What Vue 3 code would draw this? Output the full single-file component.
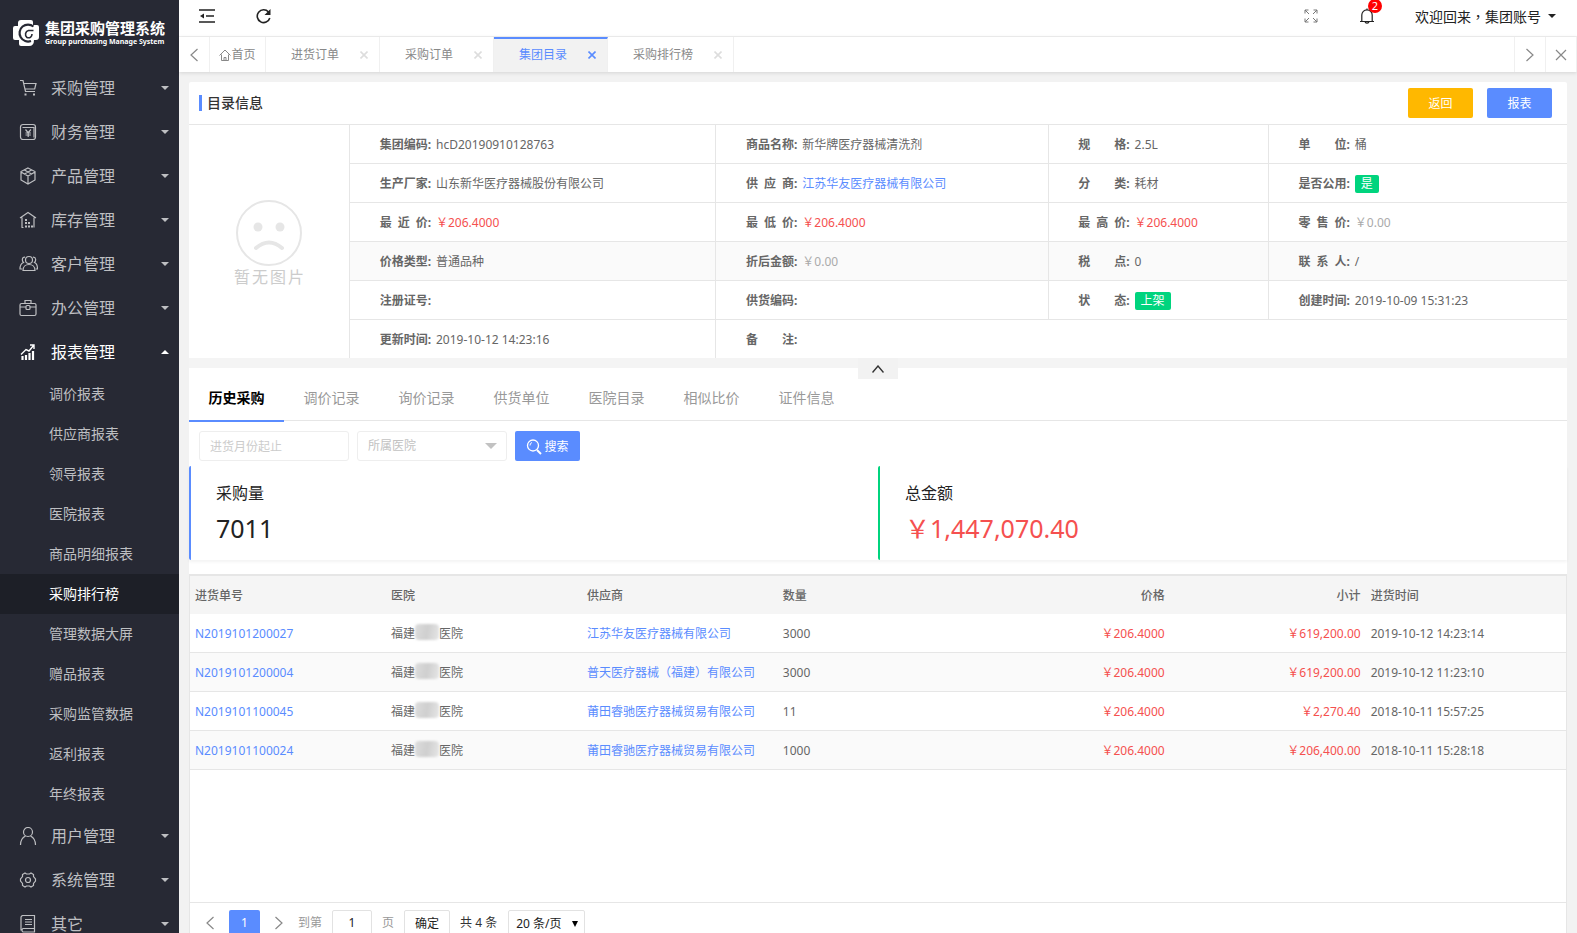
<script setup>
import { ref } from 'vue'

const topMenu = [
  { name: '采购管理', icon: 'cart' },
  { name: '财务管理', icon: 'finance' },
  { name: '产品管理', icon: 'box' },
  { name: '库存管理', icon: 'store' },
  { name: '客户管理', icon: 'people' },
  { name: '办公管理', icon: 'case' },
  {
    name: '报表管理',
    icon: 'chart',
    children: [
      '调价报表', '供应商报表', '领导报表', '医院报表', '商品明细报表', '采购排行榜',
      '管理数据大屏', '赠品报表', '采购监管数据', '返利报表', '年终报表',
    ],
  },
  { name: '用户管理', icon: 'user' },
  { name: '系统管理', icon: 'gear' },
  { name: '其它', icon: 'book' },
]
const activeChild = ref('采购排行榜')

const pageTabs = ['进货订单', '采购订单', '集团目录', '采购排行榜']
const activePage = ref('集团目录')

const two = '\u2003\u2003'
const en = '\u2002'
const infoRows = [
  [
    { label: '集团编码', value: 'hcD20190910128763' },
    { label: '商品名称', value: '新华牌医疗器械清洗剂' },
    { label: `规${two}格`, value: '2.5L' },
    { label: `单${two}位`, value: '桶' },
  ],
  [
    { label: '生产厂家', value: '山东新华医疗器械股份有限公司' },
    { label: `供${en}应${en}商`, value: '江苏华友医疗器械有限公司', kind: 'link' },
    { label: `分${two}类`, value: '耗材' },
    { label: '是否公用', value: '是', kind: 'tag' },
  ],
  [
    { label: `最${en}近${en}价`, value: '￥206.4000', kind: 'red' },
    { label: `最${en}低${en}价`, value: '￥206.4000', kind: 'red' },
    { label: `最${en}高${en}价`, value: '￥206.4000', kind: 'red' },
    { label: `零${en}售${en}价`, value: '￥0.00', kind: 'muted' },
  ],
  [
    { label: '价格类型', value: '普通品种' },
    { label: '折后金额', value: '￥0.00', kind: 'muted' },
    { label: `税${two}点`, value: '0' },
    { label: `联${en}系${en}人`, value: '/' },
  ],
  [
    { label: '注册证号', value: '' },
    { label: '供货编码', value: '' },
    { label: `状${two}态`, value: '上架', kind: 'tag' },
    { label: '创建时间', value: '2019-10-09 15:31:23' },
  ],
  [
    { label: '更新时间', value: '2019-10-12 14:23:16' },
    { label: `备${two}注`, value: '', span: 3 },
  ],
]

const detailTabs = ['历史采购', '调价记录', '询价记录', '供货单位', '医院目录', '相似比价', '证件信息']
const activeDetail = ref('历史采购')

const orders = [
  { id: 'N2019101200027', supplier: '江苏华友医疗器械有限公司', qty: '3000', price: '￥206.4000', total: '￥619,200.00', time: '2019-10-12 14:23:14' },
  { id: 'N2019101200004', supplier: '普天医疗器械（福建）有限公司', qty: '3000', price: '￥206.4000', total: '￥619,200.00', time: '2019-10-12 11:23:10' },
  { id: 'N2019101100045', supplier: '莆田睿驰医疗器械贸易有限公司', qty: '11', price: '￥206.4000', total: '￥2,270.40', time: '2018-10-11 15:57:25' },
  { id: 'N2019101100024', supplier: '莆田睿驰医疗器械贸易有限公司', qty: '1000', price: '￥206.4000', total: '￥206,400.00', time: '2018-10-11 15:28:18' },
]
</script>

<template>
  <div class="app">
    <aside class="side">
      <div class="brand">
        <svg class="brand-mark" viewBox="0 0 26 26" aria-hidden="true">
          <path fill="#fff" d="M8 0h10q2 0 2 2v3h4q2 0 2 2v10q0 3-3 3h-2q0 6-5 6H8q-2 0-2-2v-4H2q-2 0-2-2V8q0-2 2-2h3V3q0-3 3-3z" />
          <path fill="none" stroke="#272934" stroke-width="2.200" d="M20.500 6.500a8.500 8.500 0 1 0-2.500 14.500" />
          <path fill="none" stroke="#272934" stroke-width="1.600" d="M20.500 10.500h-5a4 4 0 0 0-1.500 7c3 1 5-1 5-3.500" />
        </svg>
        <div>
          <div class="brand-name">集团采购管理系统</div>
          <div class="brand-sub">Group purchasing Manage System</div>
        </div>
      </div>
      <nav>
        <div v-for="m in topMenu" :key="m.name">
          <button class="menu" :class="{ open: m.children }">
            <svg class="menu-icon" viewBox="0 0 18 18" aria-hidden="true">
              <g v-if="m.icon === 'cart'">
                <path d="M.5 1.500h3L6 12.500h9.500M4 4.500h12.500l-1.300 5.500H5.500" /><path d="M6 14.500v2M14.500 14.500v2" stroke-width="2" />
              </g>
              <g v-else-if="m.icon === 'finance'">
                <rect x="1" y="1.500" width="15" height="15" rx="2.500" /><path d="M3 4.500h11.500v10M6 6.500l2.700 3.200 2.700-3.200M8.700 9.700v4.300M6 10h5.400M6 12h5.400" />
              </g>
              <g v-else-if="m.icon === 'box'">
                <path d="M8.500 1l7 3.500v8.500l-7 4-7-4V4.500zM1.500 5l7 4 7-4M8.500 9v8M5 3l7 4M12 3L5 7" />
              </g>
              <g v-else-if="m.icon === 'store'">
                <path d="M.5 7l8-5.500 8 5.500M2.500 6.500v10M14.500 6.500v10M2 16.500h2" /><path stroke-dasharray="2 1" stroke-width="2" d="M5.500 9h2M5.500 12h5M5.500 15.500h8" />
              </g>
              <g v-else-if="m.icon === 'people'">
                <circle cx="9.500" cy="5" r="3.500" /><path d="M3.500 15.500c0-8 12-8 12 0zM5.500 2.200C2 2 2.500 6 4 7.500c-2.500 1-3.500 3-3.500 6.500h2M13.500 2.200C17 2 16.500 6 15 7.500c2.500 1 3 3 3 6.500h-1.500" />
              </g>
              <g v-else-if="m.icon === 'case'">
                <rect x=".5" y="4.500" width="16" height="12" rx="1.500" /><path d="M5.500 4.500v-3h6v3M.5 8h6M10.500 8h6" /><rect x="6.500" y="6.500" width="4" height="4" rx="1" />
              </g>
              <g v-else-if="m.icon === 'chart'">
                <path stroke-width="2.200" d="M3 13v4M6.500 12v5M10 10v7M13.500 8v9" /><path stroke-width="1.400" d="M1.500 11.500l5-5 3 1.500 4.500-5.500M10.500 2h4v4" />
              </g>
              <g v-else-if="m.icon === 'user'">
                <circle cx="8.500" cy="5" r="4.500" /><path d="M1 18c0-5 2-7.500 5-9M16 18c0-5-2-7.500-5-9" />
              </g>
              <g v-else-if="m.icon === 'gear'">
                <path d="M5.500 2l1.500 1h3l1.500-1 2.500 1.500v2L16 8v2l-2 2.500v2L11.500 16 10 15H7l-1.500 1L3 14.500v-2L1 10V8l2-2.500v-2z" /><circle cx="8.500" cy="9" r="2.500" />
              </g>
              <g v-else>
                <path d="M15 13.500H3.500a2 2 0 0 0 0 3.500H15zM15 13.500v-13H3.500a2 2 0 0 0-2 2v13M5.500 4.500h7M5.500 7h7M5.500 9.500h7" />
              </g>
            </svg>
            <span>{{ m.name }}</span>
            <i class="caret"></i>
          </button>
          <div v-if="m.children">
            <button
              v-for="c in m.children"
              :key="c"
              class="sub"
              :class="{ on: c === activeChild }"
              @click="activeChild = c"
            >{{ c }}</button>
          </div>
        </div>
      </nav>
    </aside>

    <div class="main">
      <header class="top">
        <div class="top-left">
          <button class="bare" aria-label="收起菜单">
            <svg width="16" height="16" viewBox="0 0 16 16"><path fill="none" stroke="#222" stroke-width="1.500" d="M0 2h16M7 8h8M0 14h16" /><path fill="#222" d="M1 8l4-2.500v5z" /></svg>
          </button>
          <button class="bare" aria-label="刷新">
            <svg width="16" height="16" viewBox="0 0 16 16"><path fill="none" stroke="#222" stroke-width="1.600" d="M13.800 10A6.400 6.400 0 1 1 12.500 4" /><path fill="#222" d="M14.500 1v6H8.500z" /></svg>
          </button>
        </div>
        <div class="top-right">
          <button class="bare" aria-label="全屏">
            <svg width="14" height="14" viewBox="0 0 14 14"><path fill="none" stroke="#777" d="M1 4.500V1h3.500M1 1l4 4M9.500 1H13v3.500M13 1L9 5M1 9.500V13h3.500M1 13l4-4M13 9.500V13H9.500M13 13L9 9" /></svg>
          </button>
          <button class="bare bell" aria-label="消息">
            <svg width="16" height="16" viewBox="0 0 16 16"><path fill="none" stroke="#222" stroke-width="1.200" d="M1 13.500h14M2.800 13.500V7a5.200 5.200 0 0 1 10.400 0v6.500M6 14q2 2.400 4 0M8 2V.5" /></svg>
            <span class="badge">2</span>
          </button>
          <button class="bare account"><span>欢迎回来<span class="comma">，</span>集团账号</span><i class="caret dark"></i></button>
        </div>
      </header>

      <div class="pages">
        <button class="nav-btn" aria-label="向左">
          <svg width="8" height="14" viewBox="0 0 8 14"><path d="M7.500 1l-6.500 6 6.500 6" /></svg>
        </button>
        <button class="home">
          <svg width="12" height="12" viewBox="0 0 12 12"><path fill="none" stroke="#888" d="M.5 6.500L6 1l5.500 5.500M2.500 5.500v6h7v-6M5 11.500v-3h2v3" /></svg>首页
        </button>
        <div v-for="p in pageTabs" :key="p" class="page" :class="{ on: p === activePage }">
          <button class="bare page-name" @click="activePage = p">{{ p }}</button>
          <button class="bare page-x" :aria-label="'关闭' + p">
            <svg width="8" height="8" viewBox="0 0 8 8"><path d="M.5.5l7 7M7.500.5l-7 7" /></svg>
          </button>
        </div>
        <button class="nav-btn right" aria-label="向右">
          <svg width="8" height="14" viewBox="0 0 8 14"><path d="M.5 1L7 7l-6.500 6" /></svg>
        </button>
        <button class="nav-btn" aria-label="关闭">
          <svg width="12" height="12" viewBox="0 0 12 12"><path d="M1 1l10 10M11 1L1 11" /></svg>
        </button>
      </div>

      <main class="card">
        <div class="card-head">
          <h1>目录信息</h1>
          <button class="btn amber">返回</button>
          <button class="btn">报表</button>
        </div>

        <div class="info">
          <div class="photo">
            <svg width="66" height="66" viewBox="0 0 66 66" aria-hidden="true">
              <circle cx="33" cy="33" r="32" fill="none" stroke="#e6e6e6" stroke-width="2" />
              <circle cx="22" cy="27" r="4.500" fill="#e6e6e6" /><circle cx="44" cy="27" r="4.500" fill="#e6e6e6" />
              <path d="M20 48q13-11 26 0" fill="none" stroke="#e6e6e6" stroke-width="4" stroke-linecap="round" />
            </svg>
            <div class="photo-text"><span v-for="ch in '暂无图片'" :key="ch">{{ ch }}</span></div>
          </div>
          <table class="facts">
            <colgroup><col class="c1" /><col class="c2" /><col class="c3" /><col /></colgroup>
            <tbody>
              <tr v-for="(row, i) in infoRows" :key="i" :class="{ tint: i === 3 }">
                <td v-for="f in row" :key="f.label" :colspan="f.span || 1">
                  <span class="k">{{ f.label }}:</span>
                  <a v-if="f.kind === 'link'" href="#" class="v">{{ f.value }}</a>
                  <span v-else class="v" :class="f.kind">{{ f.value }}</span>
                </td>
              </tr>
            </tbody>
          </table>
        </div>

        <div class="strip">
          <button class="fold" aria-label="折叠">
            <svg width="12" height="8" viewBox="0 0 12 8"><path fill="none" stroke="#333" stroke-width="1.400" d="M.5 7.500L6 1l5.500 6.500" /></svg>
          </button>
        </div>

        <div class="dtabs">
          <button v-for="t in detailTabs" :key="t" :class="{ on: t === activeDetail }" @click="activeDetail = t">{{ t }}</button>
        </div>

        <form class="filters" @submit.prevent>
          <input class="field" type="text" placeholder="进货月份起止" aria-label="进货月份起止" />
          <span class="pick">
            <select class="field" aria-label="所属医院"><option>所属医院</option></select>
            <svg width="12" height="6" viewBox="0 0 12 6"><path fill="#c2c2c2" d="M0 0h12L6 6z" /></svg>
          </span>
          <button class="btn search">
            <svg width="16" height="16" viewBox="0 0 16 16"><circle cx="7" cy="6.500" r="5.500" fill="none" stroke="#fff" stroke-width="1.300" /><path d="M11 11l4 4" stroke="#fff" stroke-width="2" /><path d="M4 6.500a3 3 0 0 1 2-3" fill="none" stroke="#fff" /></svg>搜索
          </button>
        </form>

        <div class="sums">
          <section class="sum">
            <h2>采购量</h2>
            <p>7011</p>
          </section>
          <section class="sum green">
            <h2>总金额</h2>
            <p class="red">￥1,447,070.40</p>
          </section>
        </div>

        <div class="grid">
          <table class="orders">
            <colgroup><col v-for="n in 6" :key="n" class="oc" /><col /></colgroup>
            <thead>
              <tr>
                <th>进货单号</th><th>医院</th><th>供应商</th><th>数量</th>
                <th class="num">价格</th><th class="num">小计</th><th>进货时间</th>
              </tr>
            </thead>
            <tbody>
              <tr v-for="o in orders" :key="o.id">
                <td><a href="#">{{ o.id }}</a></td>
                <td>福建<i class="mask"></i>医院</td>
                <td><a href="#">{{ o.supplier }}</a></td>
                <td>{{ o.qty }}</td>
                <td class="num red">{{ o.price }}</td>
                <td class="num red">{{ o.total }}</td>
                <td>{{ o.time }}</td>
              </tr>
            </tbody>
          </table>
        </div>

        <div class="pager">
          <button class="bare arrow" aria-label="上一页">
            <svg width="8" height="14" viewBox="0 0 8 14"><path d="M7.500 1l-6.500 6 6.500 6" /></svg>
          </button>
          <button class="current">1</button>
          <button class="bare arrow next" aria-label="下一页">
            <svg width="8" height="14" viewBox="0 0 8 14"><path d="M.5 1L7 7l-6.500 6" /></svg>
          </button>
          <label class="jump">到第<input type="text" value="1" />页</label>
          <button class="go">确定</button>
          <span class="count">共 4 条</span>
          <span class="size">
            <select aria-label="每页条数"><option>20 条/页</option></select>
            <svg width="6" height="6" viewBox="0 0 6 6"><path fill="#000" d="M0 0h6L3 6z" /></svg>
          </span>
        </div>
      </main>
    </div>
  </div>
</template>

<style>
body {
  margin: 0;
}
</style>

<style scoped>
* {
  box-sizing: border-box;
}
.app {
  display: flex;
  height: 100vh;
  overflow: hidden;
  background: #f2f2f2;
  color: #666;
  font: 12px/20px "Noto Sans", "Noto Sans CJK SC", sans-serif;
}
button,
input,
select {
  margin: 0;
  padding: 0;
  border: 0;
  border-radius: 0;
  background: none;
  color: inherit;
  font: inherit;
  outline: none;
}
button {
  cursor: pointer;
}
select {
  appearance: none;
}
svg {
  display: block;
  flex: none;
}
a {
  color: #5a8cff;
  text-decoration: none;
}
h1,
h2,
p {
  margin: 0;
}

/* sidebar */
.side {
  flex: none;
  width: 179px;
  background: #272934;
  color: #bebfc2;
}
.brand {
  display: flex;
  align-items: center;
  gap: 6px;
  height: 66px;
  padding-left: 13px;
  color: #fff;
}
.brand-mark {
  width: 26px;
  height: 26px;
}
.brand-name {
  font-size: 15px;
  font-weight: 700;
  line-height: 18px;
}
.brand-sub {
  font-size: 7px;
  font-weight: 700;
  line-height: 10px;
  white-space: nowrap;
}
.menu {
  display: flex;
  align-items: center;
  width: 100%;
  height: 44px;
  padding: 0 10px 0 19px;
  font-size: 16px;
  text-align: left;
}
.menu span {
  flex: 1;
  margin-left: 13px;
}
.menu-icon {
  width: 19px;
  height: 18px;
  fill: none;
  stroke: currentColor;
  stroke-width: 1.2;
}
.menu.open {
  color: #fff;
}
.caret {
  border: 4px solid transparent;
  border-top-color: currentColor;
  border-bottom-width: 0;
}
.menu.open .caret {
  border: 4px solid transparent;
  border-bottom-color: currentColor;
  border-top-width: 0;
}
.sub {
  display: block;
  width: 100%;
  height: 40px;
  padding-left: 49px;
  font-size: 14px;
  text-align: left;
}
.sub.on {
  background: #1d1f27;
  color: #fff;
}

/* top bar */
.main {
  display: flex;
  flex: 1;
  flex-direction: column;
  min-width: 0;
}
.top {
  display: flex;
  flex: none;
  align-items: center;
  justify-content: space-between;
  height: 37px;
  padding: 0 21px 4px 20px;
  border-bottom: 1px solid #f0f0f0;
  background: #fff;
}
.top-left {
  display: flex;
  gap: 41px;
}
.top-right {
  display: flex;
  align-items: center;
}
.bell {
  position: relative;
  margin: 0 40px 0 41px;
}
.badge {
  position: absolute;
  top: -9px;
  right: -7px;
  width: 14px;
  height: 14px;
  border-radius: 50%;
  background: #f00;
  color: #fff;
  font-size: 11px;
  line-height: 14px;
}
.account {
  display: flex;
  align-items: center;
  gap: 7px;
  color: #222;
  font-size: 14px;
}
.comma {
  font-family: "Noto Sans CJK TC", sans-serif;
}
.pages {
  position: relative;
  display: flex;
  flex: none;
  height: 35px;
  background: #fff;
  color: #888;
  box-shadow: 0 1px 4px rgba(0, 0, 0, 0.12);
}
.nav-btn,
.home,
.page {
  display: flex;
  align-items: center;
  justify-content: center;
  border-right: 1px solid #f0f0f0;
}
.nav-btn {
  width: 31px;
}
.nav-btn svg,
.arrow svg {
  fill: none;
  stroke: #888;
  stroke-width: 1.2;
}
.nav-btn.right {
  width: 32px;
  margin-left: auto;
  border-left: 1px solid #f0f0f0;
}
.home {
  width: 56px;
}
.page {
  padding: 0 11px 0 25px;
}
.page-x {
  margin-left: 21px;
}
.page-x svg {
  stroke: #ddd;
  stroke-width: 1.6;
}
.page.on {
  border-top: 2px solid #5a8cff;
  padding-bottom: 2px;
  background: #f2f2f2;
  color: #5a8cff;
}
.page.on .page-x svg {
  stroke: #5a8cff;
}

/* card */
.card {
  display: flex;
  flex: 1;
  flex-direction: column;
  min-height: 0;
  margin: 10px 10px 0;
  border-radius: 2px 2px 0 0;
  background: #fff;
}
.card-head {
  display: flex;
  flex: none;
  align-items: center;
  gap: 14px;
  height: 43px;
  padding: 0 15px 0 10px;
  border-bottom: 1px solid #e6e6e6;
}
.card-head h1 {
  flex: 1;
  padding-left: 5px;
  border-left: 3px solid #5a8cff;
  color: #333;
  font-size: 14px;
  font-weight: 500;
  line-height: 16px;
}
.btn {
  width: 65px;
  height: 30px;
  padding-top: 2px;
  border-radius: 2px;
  background: #5a8cff;
  color: #fff;
}
.btn.amber {
  background: #ffb800;
}
.info {
  display: flex;
  flex: none;
}
.photo {
  display: flex;
  flex: none;
  flex-direction: column;
  align-items: center;
  justify-content: center;
  gap: 1px;
  width: 161px;
  padding-top: 4px;
  border-right: 1px solid #e6e6e6;
}
.photo-text {
  display: flex;
  gap: 2px;
  color: #ccc;
  font-size: 16px;
}
.facts {
  flex: 1;
  border-spacing: 0;
  table-layout: fixed;
}
.c1 {
  width: 30.1%;
}
.c2 {
  width: 27.3%;
}
.c3 {
  width: 18.1%;
}
.facts td {
  height: 39px;
  padding: 2px 0 0;
  border-right: 1px solid #e6e6e6;
  border-bottom: 1px solid #e6e6e6;
  white-space: nowrap;
}
.facts td:last-child {
  border-right: 0;
}
.facts tr:last-child td {
  height: 38px;
  border-bottom: 0;
}
.tint {
  background: #fafafa;
}
.k {
  display: inline-block;
  width: 81px;
  margin-right: 5px;
  font-weight: 700;
  text-align: right;
}
.red {
  color: #f5504f;
}
.muted {
  color: #aaa;
}
.tag {
  display: inline-block;
  padding: 0 6px;
  border-radius: 2px;
  background: #00d47e;
  color: #fff;
  line-height: 18px;
}
.strip {
  display: flex;
  flex: none;
  justify-content: center;
  height: 10px;
  background: #f4f4f4;
}
.fold {
  z-index: 1;
  display: flex;
  align-items: center;
  justify-content: center;
  width: 40px;
  height: 21px;
  background: #f2f2f2;
}
.dtabs {
  display: flex;
  flex: none;
  height: 53px;
  border-bottom: 1px solid #e6e6e6;
  color: #999;
  font-size: 14px;
}
.dtabs button {
  width: 95px;
  height: 54px;
  padding-top: 8px;
  border-bottom: 2px solid transparent;
}
.dtabs .on {
  border-bottom-color: #5a8cff;
  color: #000;
  font-weight: 700;
}
.filters {
  display: flex;
  flex: none;
  gap: 8px;
  padding: 10px 10px 5px;
}
.field {
  width: 150px;
  height: 30px;
  padding: 0 10px;
  border: 1px solid #eee;
  border-radius: 3px;
  color: #c2c2c2;
}
.field::placeholder {
  color: #ccc;
}
.pick,
.size {
  display: grid;
  align-items: center;
}
.pick > *,
.size > * {
  grid-area: 1 / 1;
}
.pick svg,
.size svg {
  justify-self: end;
  margin-right: 10px;
  pointer-events: none;
}
.search {
  display: flex;
  align-items: center;
  justify-content: center;
  gap: 2px;
}
.sums {
  display: flex;
  flex: none;
  margin-bottom: 14px;
  box-shadow: 0 2px 3px rgba(0, 0, 0, 0.05);
}
.sum {
  flex: 1;
  height: 94px;
  padding: 15px 25px;
  border-left: 2px solid #5a8cff;
  border-radius: 2px;
  color: #222;
}
.sum.green {
  border-left-color: #00d47e;
}
.sum h2 {
  font-size: 16px;
  font-weight: 400;
  line-height: 24px;
}
.sum p {
  margin-top: 5px;
  font-size: 25px;
  line-height: 36px;
}
.sum .red {
  color: #f5504f;
}

/* orders */
.grid {
  flex: 1;
  min-height: 0;
  border: 1px solid #e6e6e6;
  border-top-width: 2px;
}
.orders {
  width: 100%;
  border-spacing: 0;
  table-layout: fixed;
}
.oc {
  width: 14.24%;
}
.orders th {
  height: 38px;
  padding: 2px 5px 0;
  background: #f5f5f5;
  font-weight: 500;
  text-align: left;
}
.orders td {
  height: 39px;
  padding: 2px 5px 0;
  border-bottom: 1px solid #e6e6e6;
}
.orders tr:nth-child(even) td {
  background: #fafafa;
}
.orders .num {
  text-align: right;
}
.mask {
  display: inline-block;
  width: 24px;
  height: 16px;
  border-radius: 4px;
  background: linear-gradient(100deg, #ddd, #cfcfcf 50%, #e6e6e6);
  filter: blur(1px);
  vertical-align: -2px;
}
.pager {
  display: flex;
  flex: none;
  align-items: flex-start;
  height: 30px;
  padding: 7px 21px 0 16px;
  border: solid #e6e6e6;
  border-width: 0 1px;
  color: #999;
  line-height: 26px;
}
.pager > * {
  flex: none;
  height: 26px;
}
.arrow {
  display: flex;
  align-items: center;
  width: 23px;
}
.arrow.next {
  justify-content: flex-end;
}
.current {
  width: 31px;
  border-radius: 2px 2px 0 0;
  background: #5a8cff;
  color: #fff;
}
.jump {
  display: flex;
  gap: 10px;
  margin-left: 15px;
}
.jump input,
.go,
.size {
  height: 26px;
  border: 1px solid #e2e2e2;
  border-radius: 2px;
  color: #222;
}
.jump input {
  width: 40px;
  text-align: center;
}
.go {
  width: 46px;
  margin: 0 10px;
}
.count {
  color: #333;
}
.size {
  width: 77px;
  margin-left: 11px;
}
.size select {
  padding-left: 7px;
}
.size svg {
  margin-right: 6px;
}
</style>
